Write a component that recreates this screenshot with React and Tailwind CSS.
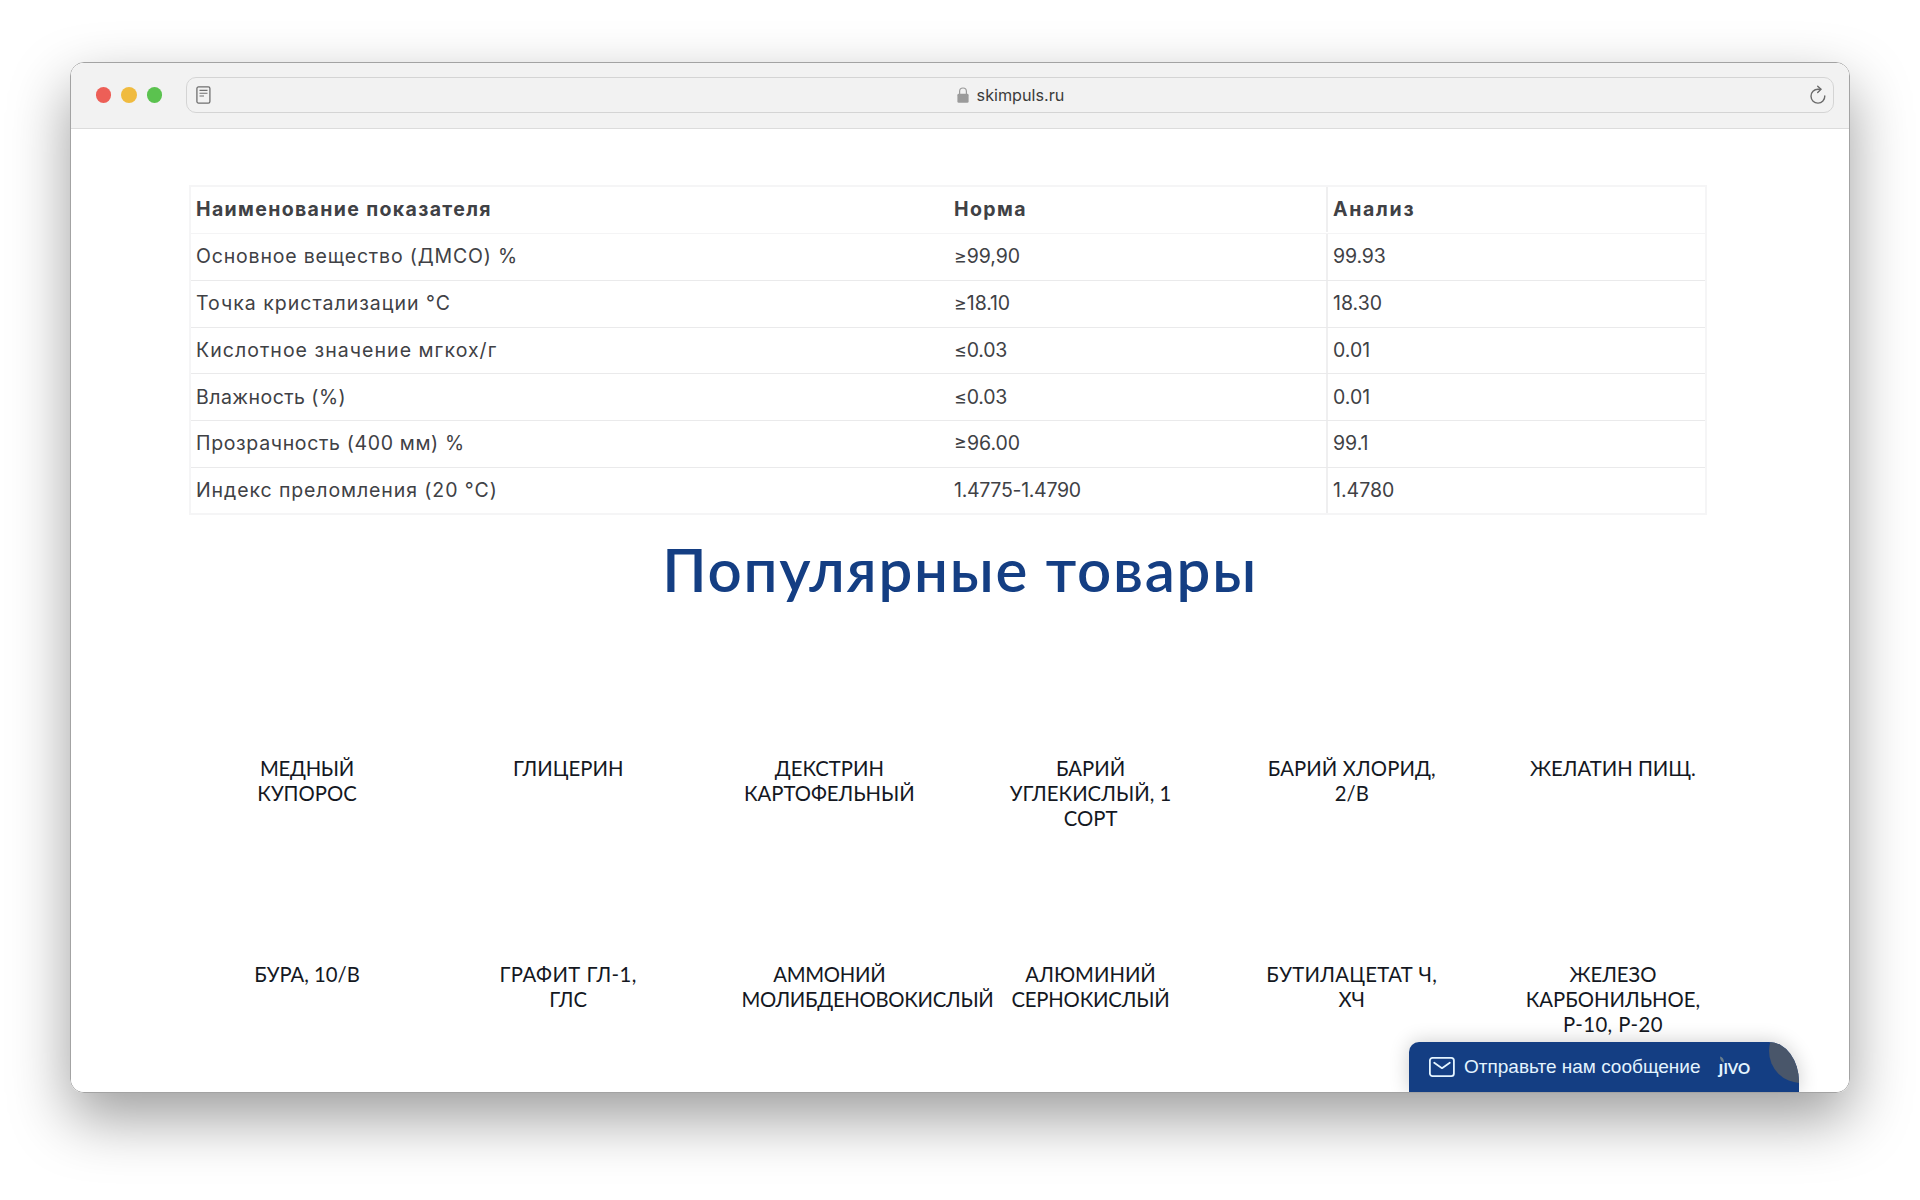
import clsx from "clsx";

const specs = [
  {
    name: ["Основное вещество (ДМСО) %", "tracking-[0.82px]"],
    norm: ["≥99,90", "tracking-[-0.1px]"],
    analysis: ["99.93", "tracking-[-0.1px]"],
  },
  {
    name: ["Точка кристализации °C", "tracking-[1px]"],
    norm: ["≥18.10", "tracking-[-0.1px]"],
    analysis: ["18.30", "tracking-normal"],
  },
  {
    name: ["Кислотное значение мгкох/г", "tracking-[1.04px]"],
    norm: ["≤0.03", "tracking-[-0.2px]"],
    analysis: ["0.01", "tracking-normal"],
  },
  {
    name: ["Влажность (%)", "tracking-[0.45px]"],
    norm: ["≤0.03", "tracking-[-0.2px]"],
    analysis: ["0.01", "tracking-normal"],
  },
  {
    name: ["Прозрачность (400 мм) %", "tracking-[0.65px]"],
    norm: ["≥96.00", "tracking-normal"],
    analysis: ["99.1", "tracking-normal"],
  },
  {
    name: ["Индекс преломления (20 °C)", "tracking-[0.9px]"],
    norm: ["1.4775-1.4790", "tracking-[-0.3px]"],
    analysis: ["1.4780", "tracking-normal"],
  },
];

const products = [
  ["МЕДНЫЙ", "КУПОРОС"],
  ["ГЛИЦЕРИН"],
  ["ДЕКСТРИН", "КАРТОФЕЛЬНЫЙ"],
  ["БАРИЙ", "УГЛЕКИСЛЫЙ, 1", "СОРТ"],
  ["БАРИЙ ХЛОРИД,", "2/В"],
  ["ЖЕЛАТИН ПИЩ."],
  ["БУРА, 10/В"],
  ["ГРАФИТ ГЛ-1,", "ГЛС"],
  ["АММОНИЙ", "МОЛИБДЕНОВОКИСЛЫЙ"],
  ["АЛЮМИНИЙ", "СЕРНОКИСЛЫЙ"],
  ["БУТИЛАЦЕТАТ Ч,", "ХЧ"],
  ["ЖЕЛЕЗО", "КАРБОНИЛЬНОЕ,", "Р-10, Р-20"],
];

// Lines that need a slightly tighter or looser setting than the rest
const lineTracking = {
  "ГРАФИТ ГЛ-1,": "tracking-[0.45px]",
  "БУТИЛАЦЕТАТ Ч,": "tracking-[0.3px]",
  "БАРИЙ ХЛОРИД,": "tracking-[0.1px]",
  "Р-10, Р-20": "tracking-[0.45px]",
  АММОНИЙ: "tracking-[-0.25px]",
  МОЛИБДЕНОВОКИСЛЫЙ: "tracking-[-0.3px]",
  СЕРНОКИСЛЫЙ: "tracking-[-0.2px]",
  МЕДНЫЙ: "tracking-[-0.3px]",
};

const ReaderIcon = () => (
  <svg className="h-[18px] w-[15px]" viewBox="0 0 15 18" fill="none" stroke="#6f6f6f">
    <rect x="0.9" y="0.9" width="13" height="16.2" rx="1.6" strokeWidth="1.3" />
    <path d="M3.5 4.4h8M3.5 7.2h8M3.5 10h4.5" strokeWidth="1.1" />
  </svg>
);

const LockIcon = () => (
  <svg className="h-4 w-3" viewBox="0 0 12 16" fill="none">
    <path d="M2.6 8V4.4a3.4 3.4 0 0 1 6.8 0V8" stroke="#9b9b9b" strokeWidth="1.2" />
    <rect x="0.4" y="6.8" width="11.2" height="9" rx="1.4" fill="#9b9b9b" />
  </svg>
);

const ReloadIcon = () => (
  <svg
    className="mb-0.5 h-[19px] w-4"
    viewBox="0 0 16 19"
    fill="none"
    stroke="#6b6b6b"
    strokeWidth="1.4"
    strokeLinecap="round"
    strokeLinejoin="round"
  >
    <path d="M14.8 11a6.9 6.9 0 1 1-6.9-6.7h2.8" />
    <path d="M7.7 1.2l3.3 3.1-3.3 3.3" />
  </svg>
);

const Toolbar = () => (
  <header className="flex h-[66px] items-center border-b border-[#dcdcdc] bg-[#f2f2f2] pr-[15px] pb-px pl-[24.5px]">
    <div className="flex gap-[10px]">
      <span className="size-[15.5px] rounded-full bg-[#ed5f57]" />
      <span className="size-[15.5px] rounded-full bg-[#f0bb3f]" />
      <span className="size-[15.5px] rounded-full bg-[#5bc24f]" />
    </div>
    <div className="ml-[23.5px] flex h-9 flex-1 items-center rounded-[10px] border-[1.5px] border-[#d4d4d4] pr-[7px] pl-[9.5px]">
      <ReaderIcon />
      <div className="flex flex-1 items-center justify-center gap-2">
        <LockIcon />
        <span className="font-['Inter',sans-serif] text-[16.2px] leading-5 text-[#3b3b3b]">
          skimpuls.ru
        </span>
      </div>
      <ReloadIcon />
    </div>
  </header>
);

const Cell = ({ className, children }) => (
  <div className={clsx("flex items-center pl-[5px]", className)}>{children}</div>
);

const SpecTable = () => (
  <div className="mt-14 ml-[118px] w-[1518px] border-2 border-[#f5f5f6] font-['Inter',sans-serif] text-[19.5px] text-[#404145]">
    <div className="grid h-[47px] grid-cols-[758px_377px_1fr] border-b border-[#f4f4f5] pb-px font-bold">
      <Cell className="tracking-[1.35px]">Наименование показателя</Cell>
      <Cell className="tracking-[1.4px]">Норма</Cell>
      <Cell className="border-l-2 border-[#efeff0] tracking-[1.7px]">Анализ</Cell>
    </div>
    {specs.map(({ name, norm, analysis }, i) => (
      <div
        key={name[0]}
        className={clsx(
          "grid grid-cols-[758px_377px_1fr] border-[#eaeaeb]",
          i < specs.length - 1 ? "h-[46.8px] border-b" : "h-[45px]",
        )}
      >
        <Cell className={name[1]}>{name[0]}</Cell>
        <Cell className={norm[1]}>{norm[0]}</Cell>
        <Cell className={clsx("border-l-2 border-[#efeff0]", analysis[1])}>{analysis[0]}</Cell>
      </div>
    ))}
  </div>
);

const JivoLogo = () => (
  <span className="relative ml-[18px] flex items-baseline font-['Lato',sans-serif] text-[19px] leading-5 font-bold">
    j<span className="text-[15px]">IVO</span>
    <svg className="absolute -top-px left-0 h-[7px] w-[6px]" viewBox="0 0 6 7">
      <rect width="6" height="7" fill="#143e83" />
      <path d="M1 0.5c2.6 0.8 4 2.8 4 6C2.6 5.8 1 3.8 1 0.5Z" fill="#6c7f8c" />
    </svg>
  </span>
);

// Chat launcher pinned to the bottom edge of the window
const ChatWidget = () => (
  <div className="absolute right-[50px] bottom-0 flex h-[50px] w-[390px] items-center overflow-hidden rounded-tl-[10px] rounded-tr-[30px_40px] bg-[#143e83] pl-5 text-[#e3f4ff] shadow-[0_0_20px_rgba(0,0,0,0.2)]">
    <svg className="h-5 w-[26px]" viewBox="0 0 26 20" fill="none" stroke="currentColor" strokeWidth="1.8">
      <rect x="0.9" y="0.9" width="24" height="18.2" rx="2.6" />
      <path d="M5.2 5.8l7.8 5.4 7.8-5.4" strokeLinecap="round" strokeLinejoin="round" />
    </svg>
    <span className="ml-[9px] font-['Liberation_Sans',Arial,sans-serif] text-[19px] leading-6 whitespace-nowrap">
      Отправьте нам сообщение
    </span>
    <JivoLogo />
    <span className="absolute -top-[23px] -right-[34px] size-16 rounded-full bg-[#49566a]" />
  </div>
);

const App = () => (
  <div className="h-[1200px] w-[1920px] overflow-hidden bg-white pt-[62px] pl-[70px]">
    <div className="h-[1031px] w-[1780px] rounded-[14px] border border-[#a3a3a3] shadow-[0_25px_60px_rgba(0,0,0,0.39)]">
      <div className="relative h-full overflow-hidden rounded-[13px] bg-white">
        <Toolbar />
        <SpecTable />
        <h2 className="mt-[18px] text-center font-['Lato',sans-serif] text-[60px] leading-[72px] font-semibold tracking-[1.75px] text-[#143e83]">
          Популярные товары
        </h2>
        <div className="mt-[151px] ml-[148px] grid auto-rows-[206px] grid-cols-[repeat(6,176px)] gap-x-[85.2px] text-center font-['Lato',sans-serif] text-[20.3px] leading-[25.2px] text-[#14181f]">
          {products.map((lines) => (
            <div key={lines.join(" ")}>
              {lines.map((line) => (
                <div key={line} className={clsx("whitespace-nowrap", lineTracking[line])}>
                  {line}
                </div>
              ))}
            </div>
          ))}
        </div>
        <ChatWidget />
      </div>
    </div>
  </div>
);

export default App;
